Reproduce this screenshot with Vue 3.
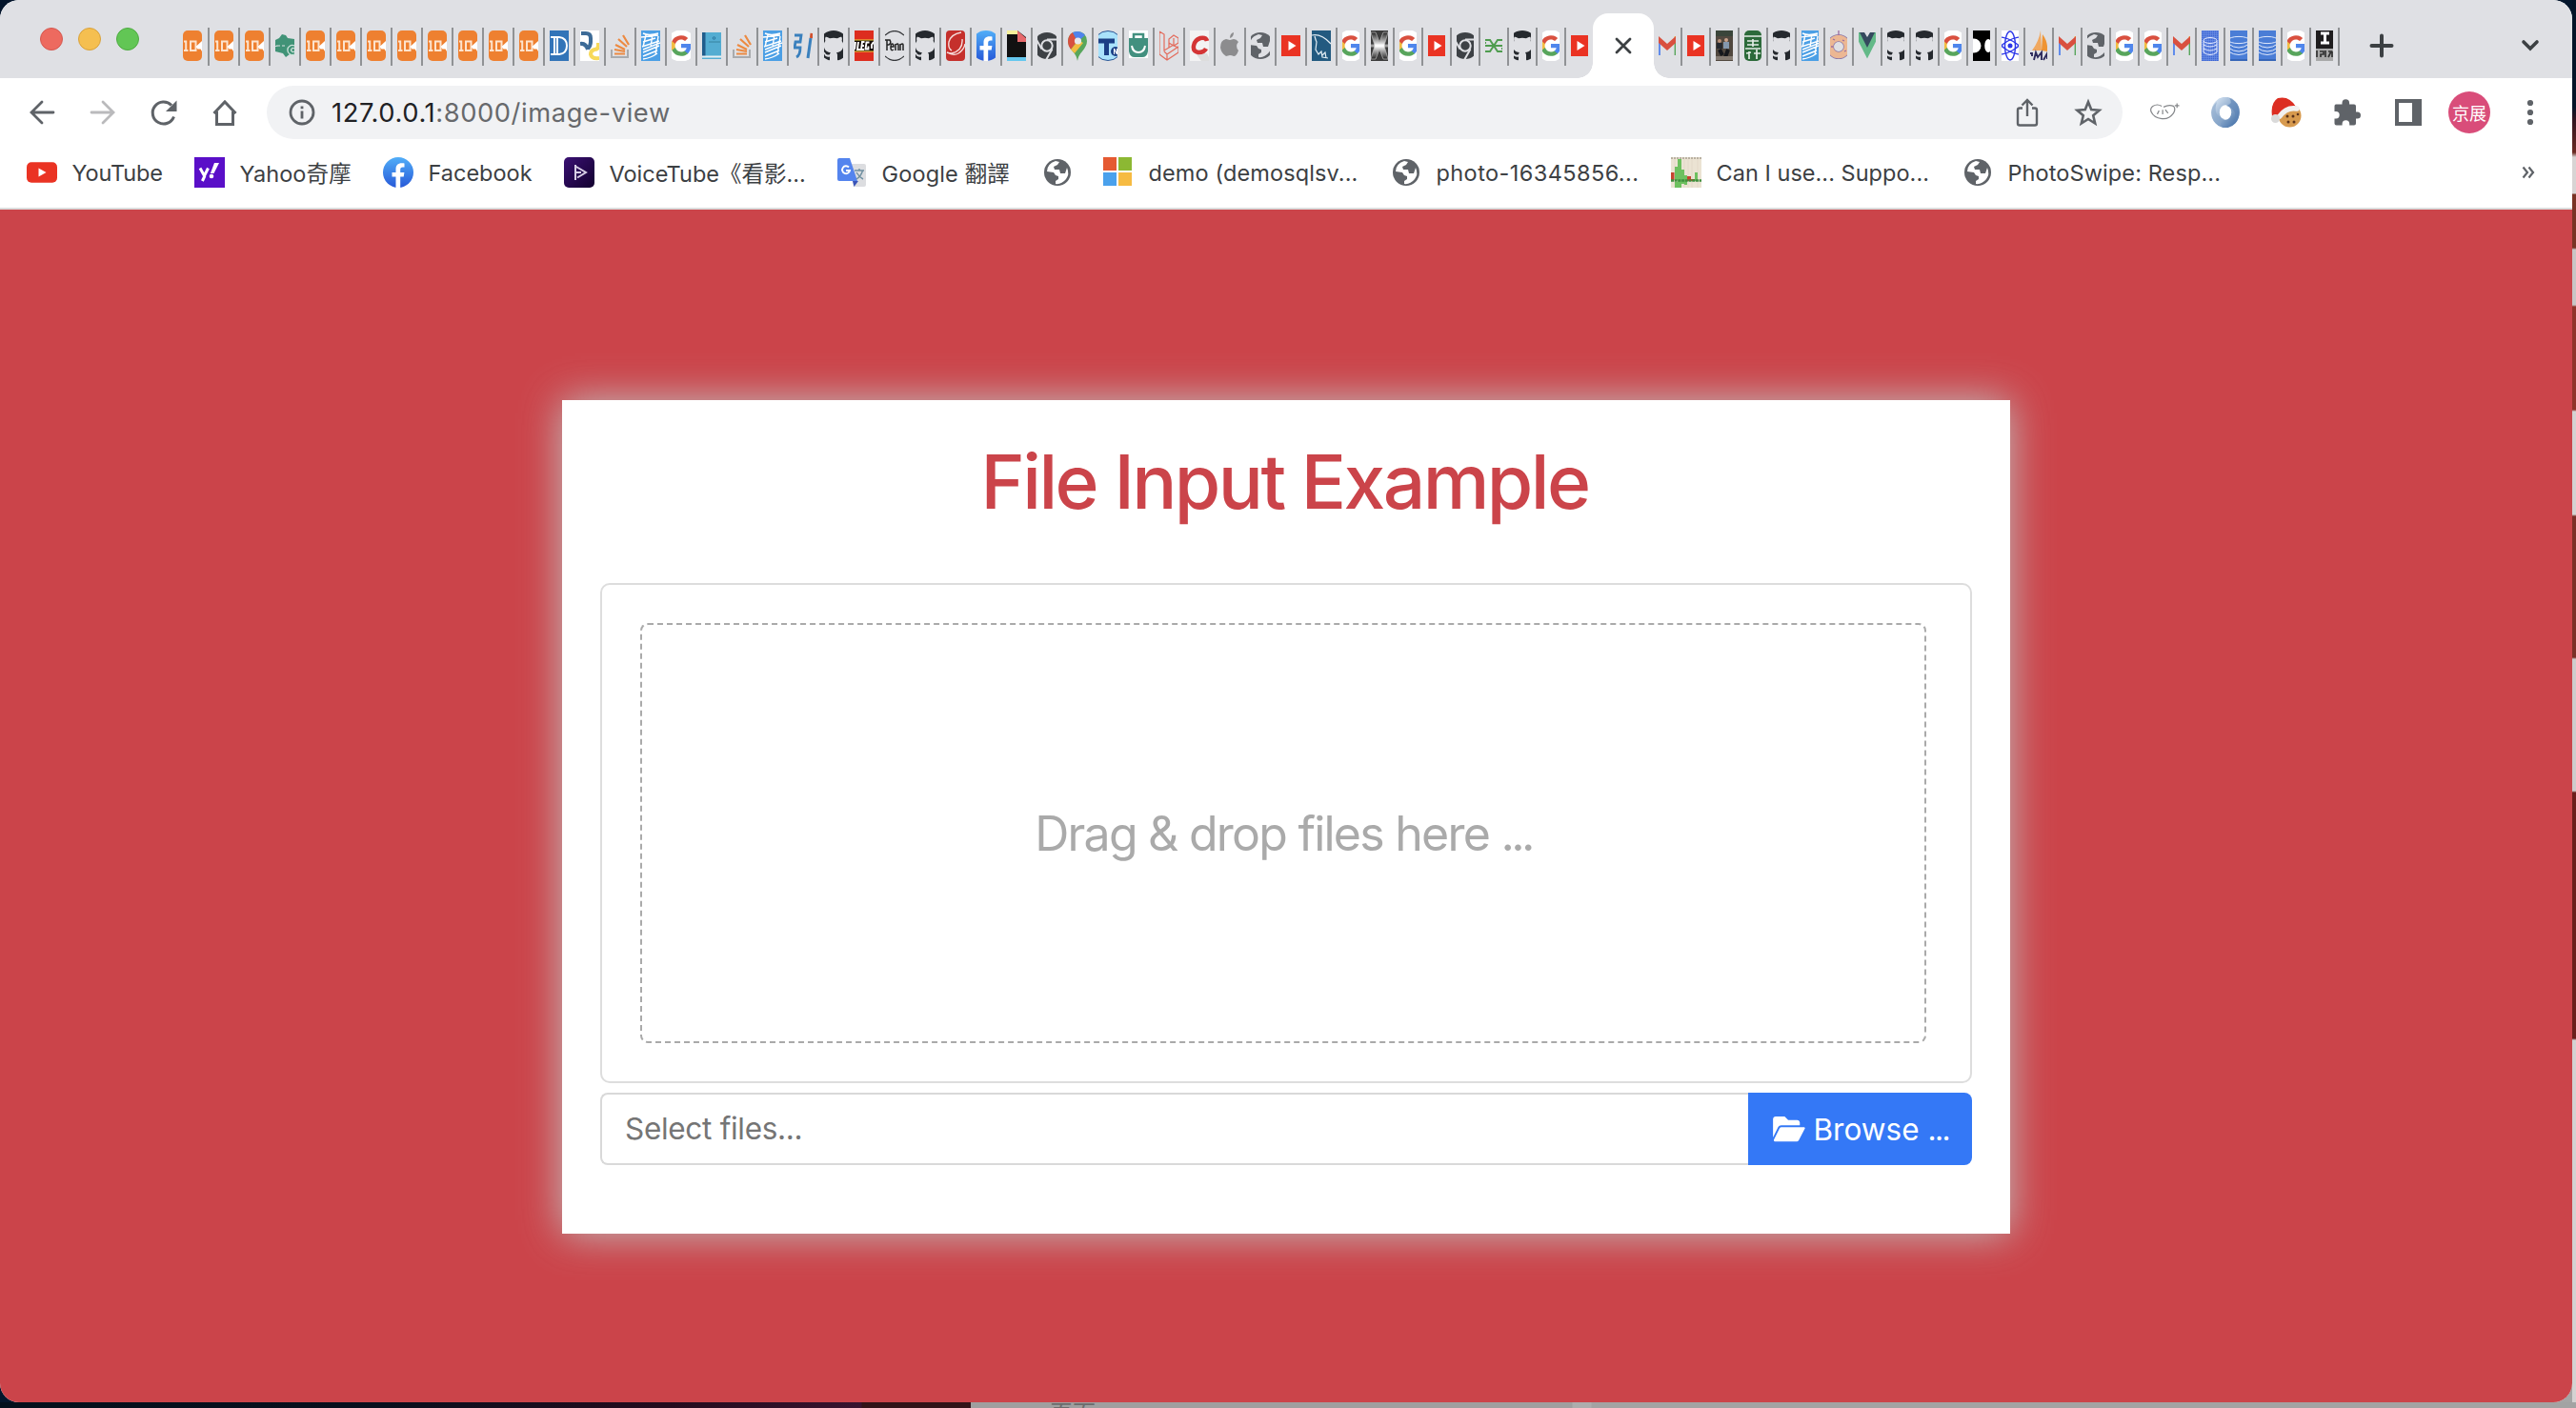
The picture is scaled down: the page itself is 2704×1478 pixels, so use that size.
<script setup>
const tabs = (width, names) => names.split(' ').map((icon) => ({ icon, width }))

const firstTabs = [
  { icon: 'job', width: 22 },
  ...tabs(20, 'job job leaf job job job job job job job job dee python stack hex google book stack hex yin github lego penn github swoosh facebook doc chrome maps tn bag laravel cee apple globe youtube mysql'),
  ...tabs(18, 'google exx google youtube chrome knot github google youtube')
]
const lastTabs = tabs(18, 'gmail youtube photo herb github hex donut vue github github google medium atom pma gmail globe google google gmail dbgrid db db google idea')

const bookmarks = [
  { icon: 'ytmark', label: 'YouTube', width: 176, spacing: -0.15 },
  { icon: 'yahoo', label: 'Yahoo奇摩', width: 198, spacing: 0.1 },
  { icon: 'facebook', label: 'Facebook', width: 190, spacing: 0 },
  { icon: 'voicetube', label: 'VoiceTube《看影...', width: 286, spacing: 0 },
  { icon: 'translate', label: 'Google 翻譯', width: 216, spacing: 0.15 },
  { icon: 'world', label: '', width: 64, spacing: 0 },
  { icon: 'microsoft', label: 'demo (demosqlsv...', width: 302, spacing: 0.12 },
  { icon: 'world', label: 'photo-16345856...', width: 294, spacing: 0.42 },
  { icon: 'caniuse', label: 'Can I use... Suppo...', width: 306, spacing: 0.03 },
  { icon: 'world', label: 'PhotoSwipe: Resp...', width: 300, spacing: 0.1 }
]
</script>

<template>
  <svg class="sprite" width="0" height="0" aria-hidden="true">
    <defs>
      <linearGradient id="fbg" x1="0" y1="0" x2="0" y2="1"><stop offset="0" stop-color="#51aef8" /><stop offset="1" stop-color="#2759d8" /></linearGradient>
      <linearGradient id="vtg" x1="0" y1="0" x2="1" y2="1"><stop offset="0" stop-color="#3a1173" /><stop offset="1" stop-color="#12002e" /></linearGradient>
      <linearGradient id="xg" x1="0" y1="0" x2="0" y2="1"><stop offset="0" stop-color="#222" /><stop offset=".5" stop-color="#fff" /><stop offset="1" stop-color="#222" /></linearGradient>
      <linearGradient id="jsg" x1="0" y1="0" x2="1" y2="1"><stop offset="0" stop-color="#cfdeee" /><stop offset="1" stop-color="#4d78ad" /></linearGradient>
      <pattern id="grid" width="2" height="2" patternUnits="userSpaceOnUse"><path d="M0 .5H2M.5 0V2" stroke="#6f92e6" stroke-width=".6" /></pattern>
    </defs>
    <symbol id="job" viewBox="0 0 32 32" preserveAspectRatio="xMidYMid slice">
      <rect x="6" width="20" height="32" rx="5" fill="#ee8030" />
      <path d="M7 11.500h2.200V21M7 21h4.500M14 11.500h5.500V21H14z" fill="none" stroke="#fde3cd" stroke-width="2" />
      <path d="M19.500 17l6.500-6v11l-1.500-2.500h-3z" fill="#fff" />
    </symbol>
    <symbol id="leaf" viewBox="0 0 32 32" preserveAspectRatio="xMidYMid slice">
      <path d="M6 10l4-2 3-4 4 1 2 3 7 1v17l-5-1-4 3-3-4-8-2V17h3l-3-1z" fill="#419377" />
      <path d="M7 16h4M13 16h3" stroke="#dfe0e4" stroke-width="1" />
      <path d="M26 16a5 5 0 1 0 0 9M26 19a2 2 0 1 0 0 3" fill="none" stroke="#cfe4dc" stroke-width="1.300" />
    </symbol>
    <symbol id="dee" viewBox="0 0 32 32" preserveAspectRatio="xMidYMid slice">
      <rect width="32" height="32" fill="#3274b8" />
      <path d="M7 7h9q8 1 8 9t-8 9H7M11 7v18M7 7h4M14 8v16" fill="none" stroke="#fff" stroke-width="2" />
    </symbol>
    <symbol id="python" viewBox="0 0 32 32" preserveAspectRatio="xMidYMid slice">
      <rect width="32" height="32" fill="#fff" />
      <path d="M7 3h5q5 0 5 5v4q0 4-3 7M6 14q6-1 8 6" fill="none" stroke="#3d6b97" stroke-width="4" />
      <path d="M25 13v3q0 4-4 4-4 1-4 5 1 5 9 4" fill="none" stroke="#f7d959" stroke-width="4" />
    </symbol>
    <symbol id="stack" viewBox="0 0 32 32" preserveAspectRatio="xMidYMid slice">
      <path d="M7 20v8h17v-8" fill="none" stroke="#a9abae" stroke-width="2" />
      <path d="M10 24.500h11M10 20l11 2M11 15l10 5M14 9l9 8M19 5l6 10" fill="none" stroke="#ec8a42" stroke-width="2.200" />
    </symbol>
    <symbol id="hex" viewBox="0 0 32 32" preserveAspectRatio="xMidYMid slice">
      <rect width="32" height="32" fill="#4b9fe5" />
      <path d="M8 3q6 3 16 0M6 7l18-2M8 12l13-4M11 5l-3 12M18 4l-2 13M7 17l18-6M8 20l18-7M8 23l17-7M8 27l15-6M8 30q8-1 15-6M24 6l-3 20" fill="none" stroke="#fff" stroke-width="1.400" />
    </symbol>
    <symbol id="google" viewBox="0 0 32 32" preserveAspectRatio="xMidYMid slice">
      <circle cx="16" cy="16" r="16.500" fill="#fff" />
      <g transform="translate(4.200 4.200) scale(.98)">
        <path fill="#4f86ec" d="M22.560 12.250c0-.78-.07-1.530-.2-2.250H12v4.260h5.920a5.060 5.060 0 0 1-2.200 3.320v2.770h3.570c2.080-1.920 3.270-4.740 3.270-8.100z" />
        <path fill="#58a55c" d="M12 23c2.970 0 5.460-.98 7.280-2.660l-3.570-2.770c-.98.660-2.230 1.060-3.710 1.060-2.860 0-5.290-1.930-6.160-4.530H2.180v2.840A11 11 0 0 0 12 23z" />
        <path fill="#f2bd42" d="M5.840 14.090a6.600 6.600 0 0 1 0-4.180V7.070H2.180a11 11 0 0 0 0 9.860z" />
        <path fill="#d9503f" d="M12 5.380c1.620 0 3.060.56 4.210 1.640l3.150-3.150A11 11 0 0 0 2.180 7.070l3.660 2.840C6.710 7.310 9.140 5.380 12 5.380z" />
      </g>
    </symbol>
    <symbol id="book" viewBox="0 0 32 32" preserveAspectRatio="xMidYMid slice">
      <rect x="6" y="2" width="20" height="28" fill="#54add2" /><rect x="6" y="2" width="3.500" height="25" fill="#205d8c" />
      <path d="M6 27.500h20" stroke="#e7f0f5" stroke-width="2" /><circle cx="18.500" cy="8" r="1.300" fill="none" stroke="#28759e" /><path d="M13 12h12" stroke="#37829f" />
    </symbol>
    <symbol id="yin" viewBox="0 0 32 32" preserveAspectRatio="xMidYMid slice">
      <path d="M7 5h7l-1 7H8l-1 6h6q0 8-4 10" fill="none" stroke="#3a80bd" stroke-width="2.800" />
      <path d="M24 8l-3 21" stroke="#3a80bd" stroke-width="3" /><path d="M25 3l-.6 5" stroke="#d1512f" stroke-width="3" />
    </symbol>
    <symbol id="github" viewBox="0 0 32 32" preserveAspectRatio="xMidYMid slice">
      <path fill="#25292e" d="M16 0C7 0 0 7 0 16c0 7 4.600 13 11 15.300.8.100 1-.4 1-.8v-3c-4.400 1-5.400-1.900-5.400-1.900-.7-1.900-1.800-2.400-1.800-2.400-1.400-1 .1-1 .1-1 1.600.1 2.500 1.700 2.500 1.700 1.400 2.400 3.700 1.700 4.600 1.300.1-1 .6-1.700 1-2.100-3.500-.4-7.200-1.800-7.200-7.900 0-1.700.6-3.200 1.600-4.300-.1-.4-.7-2 .2-4.200 0 0 1.300-.4 4.400 1.600a15 15 0 0 1 8 0c3.100-2 4.400-1.600 4.400-1.600.9 2.200.3 3.800.2 4.200 1 1.100 1.600 2.600 1.600 4.300 0 6.200-3.700 7.500-7.300 7.900.6.500 1.100 1.500 1.100 3v4.400c0 .4.300.9 1.100.8A16 16 0 0 0 32 16C32 7 25 0 16 0z" />
    </symbol>
    <symbol id="lego" viewBox="0 0 32 32" preserveAspectRatio="xMidYMid slice">
      <rect width="32" height="32" fill="#dd2d1f" /><rect x="5" y="9.500" width="22" height="13" fill="#f5d93c" />
      <rect x="5" y="10.500" width="22" height="11" fill="#140c08" />
      <path d="M7 12l-1 8M10 12l-1 8h3M16.500 12H14l-1 8h3M13.500 16H16M21.500 12.500h-3l-1 7h3v-3M26 12l-2 3v4" fill="none" stroke="#fff" stroke-width="1.900" />
    </symbol>
    <symbol id="penn" viewBox="0 0 32 32" preserveAspectRatio="xMidYMid slice">
      <path d="M6 5q10-9 20 0M6 27q10 9 20 0" fill="none" stroke="#36383b" stroke-width="1.200" />
      <path d="M8 10v11M6 10h5q2 3-1 5H8M12 17h3q0-3-1.500-3t-1.500 4 3 2M17 14v7M17 15q3-2 3 0v6M22 14v7M22 15q3-2 3 0v6" fill="none" stroke="#222" stroke-width="1.500" />
    </symbol>
    <symbol id="swoosh" viewBox="0 0 32 32" preserveAspectRatio="xMidYMid slice">
      <rect x="6" width="20" height="32" rx="4" fill="#c5302c" /><path d="M22 2Q11 4 9 12q-1 7 3 9M23 9q1 12-11 15-3 0-5-1 7 4 12 1 6-4 7-10" fill="none" stroke="#f6dedc" stroke-width="1.400" />
    </symbol>
    <symbol id="facebook" viewBox="0 0 32 32" preserveAspectRatio="xMidYMid slice">
      <circle cx="16" cy="16" r="16" fill="url(#fbg)" />
      <path fill="#fff" d="M13.500 32V20.600H9.500V16h4v-3.500c0-4 2.400-6.200 6-6.200 1.800 0 3 .2 3 .2v4h-1.800c-2 0-2.500 1.200-2.500 2.500v3h4.200l-.7 4.600h-3.500V32z" />
    </symbol>
    <symbol id="doc" viewBox="0 0 32 32" preserveAspectRatio="xMidYMid slice">
      <rect x="6" width="20" height="32" fill="#111" /><path d="M6 0h11v4H6z" fill="#f7f09a" /><path d="M17 0l9 8v4h-9z" fill="#e6696c" /><path d="M6 28h20v4H6z" fill="#65c7ee" /><path d="M17 0h9v7z" fill="#dfe0e4" />
    </symbol>
    <symbol id="chrome" viewBox="0 0 32 32" preserveAspectRatio="xMidYMid slice">
      <circle cx="16" cy="16" r="14" fill="#3d4145" /><circle cx="16" cy="16" r="5.700" fill="none" stroke="#dfe0e4" stroke-width="2" />
      <path d="M16 9.500h13M10.500 19.500L4 8M21.500 19.500L15 31" fill="none" stroke="#dfe0e4" stroke-width="2" />
    </symbol>
    <symbol id="maps" viewBox="0 0 32 32" preserveAspectRatio="xMidYMid slice">
      <path d="M16 32q-1-6-5-10-5-6-5-11Q7 1 16 1t10 10q0 5-5 11-4 4-5 10z" fill="#58a65c" /><path d="M6 12Q6 5 11 2l5 9-7 9q-3-4-3-8z" fill="#d85140" /><path d="M11 2q8-3 13 3l-8 7z" fill="#5083ec" /><path d="M9 20l8-10 5 3-9 11z" fill="#f2bd42" /><circle cx="16.500" cy="11" r="3.600" fill="#e8e8ea" />
    </symbol>
    <symbol id="tn" viewBox="0 0 32 32" preserveAspectRatio="xMidYMid slice">
      <circle cx="16" cy="16" r="15.500" fill="#a9e2fb" stroke="#2c5594" /><path d="M6 11h17M14.500 11v15" stroke="#1b3f86" stroke-width="5" /><circle cx="24" cy="22" r="5" fill="#1b3f86" /><path d="M22.500 25v-6l3 6v-6" fill="none" stroke="#fff" stroke-width="1.100" />
    </symbol>
    <symbol id="bag" viewBox="0 0 32 32" preserveAspectRatio="xMidYMid slice">
      <rect x="6" width="20" height="29" fill="#fff" /><path d="M6 8h20v14q-1 6-6 6h-8q-5 0-6-6z" fill="#42907f" /><path d="M11 8V4h10v4" fill="none" stroke="#42907f" stroke-width="2.500" /><path d="M9 16q1 7 7 7t7-7" fill="none" stroke="#fff" stroke-width="2" />
    </symbol>
    <symbol id="laravel" viewBox="0 0 32 32" preserveAspectRatio="xMidYMid slice">
      <path d="M6 1l5 3v17l5-3V9l5-4 5 3v5l-5 3-5-3M16 18l5-3v-7M6 1v24l8 6 12-8v-6l-12 8-3-3M14 31v-6M21 16l5 2" fill="none" stroke="#e36b5c" stroke-width="1.200" />
    </symbol>
    <symbol id="cee" viewBox="0 0 32 32" preserveAspectRatio="xMidYMid slice">
      <rect x="6" width="20" height="32" fill="#f3f3f3" /><path d="M12 24h12l2 4v4h-8z" fill="#ddd" /><path d="M24 11q-1-4-7-3-6 2-7 8t5 7q6 0 8-4" fill="none" stroke="#d43535" stroke-width="4.500" />
    </symbol>
    <symbol id="apple" viewBox="0 0 32 32" preserveAspectRatio="xMidYMid slice">
      <path d="M20 9q3 0 5 3-4 4 0 9-2 6-5 6-2-1-4-1l-4 1Q7 24 6 18q0-8 6-9l4 1zM16 8q0-5 4-6 0 5-4 6z" fill="#8c8c8e" />
    </symbol>
    <symbol id="globe" viewBox="0 0 32 32" preserveAspectRatio="xMidYMid slice">
      <circle cx="16" cy="16" r="14" fill="#5f6368" /><path d="M5 15q0-8 9-11l4 1-2 3-4 2 1 3h5l1 4h5l2-6q3 7-1 12-5 6-11 5v-3l3-2v-3l-3-1-2-3z" fill="#dfe0e4" />
    </symbol>
    <symbol id="world" viewBox="0 0 32 32">
      <circle cx="16" cy="16" r="14" fill="#5f6368" /><path d="M5 15q0-8 9-11l4 1-2 3-4 2 1 3h5l1 4h5l2-6q3 7-1 12-5 6-11 5v-3l3-2v-3l-3-1-2-3z" fill="#fff" />
    </symbol>
    <symbol id="youtube" viewBox="0 0 32 32" preserveAspectRatio="xMidYMid slice">
      <rect y="5" width="32" height="22" rx="4" fill="#ea3323" /><path d="M13.500 11v10l8-5z" fill="#fff" />
    </symbol>
    <symbol id="ytmark" viewBox="0 0 32 32">
      <rect y="5.200" width="32" height="21.600" rx="5" fill="#ea3323" /><path d="M12.500 11.500v9l8-4.500z" fill="#fff" />
    </symbol>
    <symbol id="mysql" viewBox="0 0 32 32" preserveAspectRatio="xMidYMid slice">
      <rect width="32" height="32" fill="#235a80" /><path d="M6 5q10-2 20 9M9 6q1 4 2 6l-1 8 3 5 3-3 1 6 6 1M17 26l3-3 1 6" fill="none" stroke="#e3eef5" stroke-width="1.200" />
    </symbol>
    <symbol id="exx" viewBox="0 0 32 32" preserveAspectRatio="xMidYMid slice">
      <rect width="32" height="32" fill="#3c3c3c" /><path d="M7 2h5l4 10 4-10h5l-4 14 4 14h-5l-4-10-4 10H7l4-14z" fill="url(#xg)" stroke="#bbb" stroke-width=".7" /><path d="M7 16h18" stroke="#fff" stroke-width="3" opacity=".5" />
    </symbol>
    <symbol id="knot" viewBox="0 0 32 32" preserveAspectRatio="xMidYMid slice">
      <path d="M7 10h5l8 12h5M7 22h5l8-12h5M7 16h18M7 12v2M25 18v2" fill="none" stroke="#4f9c4f" stroke-width="2" />
    </symbol>
    <symbol id="gmail" viewBox="0 0 32 32" preserveAspectRatio="xMidYMid slice">
      <path d="M8 11v15" stroke="#5383ec" stroke-width="1.800" /><path d="M24.500 11v15" stroke="#58a65c" stroke-width="1.800" /><path d="M24.500 6v5" stroke="#f2bd42" stroke-width="1.800" /><path d="M7 6l9 8 9-8v7l-9 8-9-8z" fill="#d9503f" />
    </symbol>
    <symbol id="photo" viewBox="0 0 32 32" preserveAspectRatio="xMidYMid slice">
      <rect width="32" height="32" fill="#51483f" /><path d="M7 0h18v6H7z" fill="#3a453a" /><circle cx="11" cy="11" r="2" fill="#b99078" /><circle cx="18" cy="10" r="2" fill="#c9a189" /><path d="M8 13h6v6H8z" fill="#25292f" /><path d="M15 12h6v7h-6z" fill="#8397ad" /><path d="M11 20l3 6M20 20l-3 8" stroke="#16181d" stroke-width="4" /><path d="M7 29h19" stroke="#857b72" stroke-width="4" />
    </symbol>
    <symbol id="herb" viewBox="0 0 32 32" preserveAspectRatio="xMidYMid slice">
      <rect x="7" width="18" height="32" rx="5" fill="#2c6a3a" /><path d="M7 6h18M10 11h12M10 15h12M16 9v8M8 19h16M12 22v8M20 20v10M9 24l5-1M17 24h7" fill="none" stroke="#e4ece6" stroke-width="1.700" />
    </symbol>
    <symbol id="donut" viewBox="0 0 32 32" preserveAspectRatio="xMidYMid slice">
      <circle cx="16" cy="17" r="9" fill="none" stroke="#8a76a8" stroke-width="8" /><circle cx="16" cy="17" r="9" fill="none" stroke="#ecb793" stroke-width="6.500" /><path d="M16 0v5M10 9l2 1M20 10l2 1M8 17h2M22 22l2-1" stroke="#9a6c9e" stroke-width="1.300" />
    </symbol>
    <symbol id="vue" viewBox="0 0 32 32" preserveAspectRatio="xMidYMid slice">
      <path d="M2 2h28L16 29.500z" fill="#63b988" /><path d="M8 2h16l-8 16z" fill="#35495e" /><path d="M13 2h6l-3 5z" fill="#dfe0e4" />
    </symbol>
    <symbol id="medium" viewBox="0 0 32 32" preserveAspectRatio="xMidYMid slice">
      <rect width="32" height="32" fill="#000" /><circle cx="8" cy="16" r="7.500" fill="#fff" /><ellipse cx="23" cy="16" rx="3.800" ry="7" fill="#fff" />
    </symbol>
    <symbol id="atom" viewBox="0 0 32 32" preserveAspectRatio="xMidYMid slice">
      <rect width="32" height="32" fill="#fff" /><g fill="none" stroke="#2b36e8" stroke-width="1.400"><ellipse cx="16" cy="16" rx="5.500" ry="15" /><ellipse cx="16" cy="16" rx="5.500" ry="15" transform="rotate(60 16 16)" /><ellipse cx="16" cy="16" rx="5.500" ry="15" transform="rotate(120 16 16)" /></g><circle cx="16" cy="16" r="2.500" fill="#2b36e8" />
    </symbol>
    <symbol id="pma" viewBox="0 0 32 32" preserveAspectRatio="xMidYMid slice">
      <path d="M18 0q-2 12-9 21h10z" fill="#f0a860" /><path d="M20 4q6 8 5 18l-6-1z" fill="#ef9433" /><path d="M7 24h2v3M11 31l2-8 2 5 4-5v8M21 31l4-7v6" fill="none" stroke="#2d2b5c" stroke-width="1.900" />
    </symbol>
    <symbol id="dbgrid" viewBox="0 0 32 32" preserveAspectRatio="xMidYMid slice">
      <rect width="32" height="32" fill="#3f66d2" /><rect width="32" height="32" fill="url(#grid)" /><g fill="none" stroke="#e7ecff" stroke-width="1"><ellipse cx="16" cy="10.500" rx="7" ry="3" /><path d="M9 11v12q7 5 14 0V11M9 15q7 4 14 0M9 19q7 4 14 0" /></g>
    </symbol>
    <symbol id="db" viewBox="0 0 32 32" preserveAspectRatio="xMidYMid slice">
      <rect width="32" height="32" fill="#4a7dd6" /><path d="M0 31h32" stroke="#325fae" stroke-width="1.500" /><g fill="none" stroke="#dfe8fb" stroke-width="1"><ellipse cx="16" cy="10" rx="11" ry="3.600" /><path d="M5 14q11 8 22 0M5 18q11 8 22 0M5 22q11 7 22 0" /></g>
    </symbol>
    <symbol id="idea" viewBox="0 0 32 32" preserveAspectRatio="xMidYMid slice">
      <rect width="32" height="19" fill="#1f1d1e" /><rect y="19" width="32" height="13" fill="#a8a8a8" /><path d="M12 3h9M12 13h9M16.500 3v10" stroke="#fff" stroke-width="3" /><path d="M8 21v7M11 22h4v3h-3v3M17 21v7M20 22h3l-3 6M24 22v6" fill="none" stroke="#333" stroke-width="1.700" />
    </symbol>
    <symbol id="yahoo" viewBox="0 0 32 32">
      <rect width="32" height="32" fill="#5a0fc8" /><path d="M6 11.500l4.500 8 4-8M11 19.500l-2.600 5.500" fill="none" stroke="#fff" stroke-width="3" /><path d="M21 6h5l-5.500 11h-3.600z" fill="#fff" /><circle cx="18" cy="20" r="2.300" fill="#fff" />
    </symbol>
    <symbol id="voicetube" viewBox="0 0 32 32">
      <rect width="32" height="32" rx="5" fill="url(#vtg)" /><path d="M12 8v16M12 9.500l11 6.500-9 5.500M12 16h6" fill="none" stroke="#d8cfe6" stroke-width="2" />
    </symbol>
    <symbol id="translate" viewBox="0 0 32 32">
      <path d="M13 7h16q2 0 2 2v20q0 2-2 2H18z" fill="#dcdde0" /><path d="M17 25h6l-4.500 6z" fill="#3a54b8" /><path d="M3 1h11l8 24H3q-2 0-2-2V3q0-2 2-2z" fill="#5484ee" /><path d="M13 10.500a4 4 0 1 0 1 3.500h-4" fill="none" stroke="#fff" stroke-width="1.900" /><path d="M19 14h10M24 12v2M21 23q5-3 6.500-9M21 16q3 5 7 7" fill="none" stroke="#6f8fa0" stroke-width="1.400" />
    </symbol>
    <symbol id="microsoft" viewBox="0 0 32 32">
      <path d="M0 0h14v14H0z" fill="#e55a32" /><path d="M16 0h14v14H16z" fill="#8cb833" /><path d="M0 16h14v14H0z" fill="#4aa1ec" /><path d="M16 16h14v14H16z" fill="#f6bb42" />
    </symbol>
    <symbol id="caniuse" viewBox="0 0 32 32">
      <rect width="32" height="32" fill="#ebe3d3" /><path d="M0 1h32" stroke="#a9a091" stroke-width="1.500" stroke-dasharray="2 1" /><path d="M4 2v30M8 2v30M14 2v30M18 2v30M22 2v30M28 2v30" stroke="#ddd4c2" stroke-width=".6" /><path d="M0 16h3.500v8H0zM17 20h4v5h-4zM21 23h4v2h-4z" fill="#c5432f" /><path d="M4 10h3v14H4zM7 2h4v30H7zM11 13h3v15h-3zM14 19h3v10h-3zM4 26h3v6H4zM25 16h3v9h-3z" fill="#6dc05f" /><path d="M0 24.500h32" stroke="#3f8f3d" stroke-width="2.400" stroke-dasharray="3 .7" />
    </symbol>
  </svg>

  <div class="desktop">
    <div class="stage">
      <div class="window">
        <header class="tabstrip">
          <div class="lights"><i class="close"></i><i class="min"></i><i class="max"></i></div>
          <div class="tabs">
            <span v-for="(t, i) in firstTabs" :key="i" class="tab">
              <svg :width="t.width" height="32"><use :href="'#' + t.icon" width="100%" height="32" /></svg>
            </span>
          </div>
          <div class="active-tab">
            <svg width="18" height="18" viewBox="0 0 18 18"><path d="M2 2l14 14M16 2L2 16" stroke="#3c4043" stroke-width="2.800" stroke-linecap="round" /></svg>
          </div>
          <div class="tabs after">
            <span v-for="(t, i) in lastTabs" :key="i" class="tab">
              <svg :width="t.width" height="32"><use :href="'#' + t.icon" width="100%" height="32" /></svg>
            </span>
          </div>
          <svg class="plus" width="26" height="26" viewBox="0 0 26 26"><path d="M13 2.500v21M2.500 13h21" stroke="#3c4043" stroke-width="4" stroke-linecap="round" /></svg>
          <svg class="chevron" width="20" height="14" viewBox="0 0 20 14"><path d="M3 3l7 7 7-7" fill="none" stroke="#3c4043" stroke-width="3.600" stroke-linecap="round" /></svg>
        </header>

        <div class="toolbar">
          <div class="nav">
            <svg viewBox="0 0 32 32"><path d="M28 16H6M16 5L5 16l11 11" fill="none" stroke="#5f6368" stroke-width="2.800" stroke-linecap="round" /></svg>
            <svg viewBox="0 0 32 32"><path d="M4 16h22M16 5l11 11-11 11" fill="none" stroke="#bababc" stroke-width="2.800" stroke-linecap="round" /></svg>
            <svg viewBox="0 0 32 32"><path d="M26.500 20.500A11.500 11.500 0 1 1 24 8.500" fill="none" stroke="#5f6368" stroke-width="3" /><path d="M29.500 3.500V15H18z" fill="#5f6368" /></svg>
            <svg viewBox="0 0 32 32"><path d="M4.500 17L16 5l11.500 12M7.500 15v13.500h17V15" fill="none" stroke="#5f6368" stroke-width="3" /></svg>
          </div>
          <div class="omnibox">
            <svg class="info" viewBox="0 0 28 28"><circle cx="14" cy="14" r="12" fill="none" stroke="#5f6368" stroke-width="2.800" /><path d="M14 12.500v8M14 7.500v2.800" stroke="#5f6368" stroke-width="2.800" /></svg>
            <span class="url"><b>127.0.0.1</b>:8000/image-view</span>
            <svg class="share" viewBox="0 0 32 32"><path d="M11 11.500H8q-2 0-2 2v14q0 2 2 2h16q2 0 2-2v-14q0-2-2-2h-3M16 20V3.500M10.500 8.500L16 3l5.500 5.500" fill="none" stroke="#5f6368" stroke-width="2.400" /></svg>
            <svg class="star" viewBox="0 0 32 32"><path d="M16 5l3.200 8 8.400.7-6.400 5.500 2 8.300L16 23l-7.200 4.500 2-8.300-6.400-5.500 8.400-.7z" fill="none" stroke="#5f6368" stroke-width="2.600" /></svg>
          </div>
          <div class="extensions">
            <svg viewBox="0 0 34 32"><path d="M4 9q5-3 10 0M16 10q6-3 11-1 3 3 0 8-5 7-13 6Q5 22 2 15q-1-4 2-6M11 14l-2 4M15 13v5M18 13l3 4M31 6v5M28.500 8.500h5" fill="none" stroke="#85878a" stroke-width="1.300" /></svg>
            <svg viewBox="0 0 32 32"><ellipse cx="16" cy="16" rx="10.500" ry="12" fill="none" stroke="url(#jsg)" stroke-width="8.500" /><path d="M20 1q11 4 11 15-1 7-6 11 5-14-8-18 8-3 3-8z" fill="#5f86b7" opacity=".65" /><path d="M12 31Q1 27 1 16q1-7 6-11-5 14 8 18-6 4-3 8z" fill="#88a6ca" opacity=".6" /></svg>
            <svg viewBox="0 0 32 32"><circle cx="19.500" cy="19.500" r="12" fill="#d79a4e" /><g fill="#5a321b"><circle cx="17" cy="20" r="1.500" /><circle cx="23" cy="20" r="1.500" /><circle cx="18" cy="26" r="1.500" /><circle cx="24" cy="26" r="1.500" /><circle cx="28" cy="18" r="1.300" /></g><path d="M1 20Q-1 6 7 1q12-3 19 9L8 21z" fill="#dc2e22" /><path d="M9 20q7-10 18-8" fill="none" stroke="#f2f1f0" stroke-width="5.500" stroke-linecap="round" /><circle cx="4.500" cy="22.500" r="4.500" fill="#dadada" /></svg>
            <svg viewBox="0 0 32 32"><path d="M4 9h6.500V7.500a3.800 3.800 0 0 1 7.600 0V9H23q2 0 2 2v6h1.500a3.500 3.500 0 0 1 0 7H25v5q0 2-2 2h-4.800v-1.500a3.800 3.800 0 0 0-7.600 0V31H4.500q-2 0-2-2v-5H4a3.700 3.700 0 0 0 0-7.400H2.500V11q0-2 1.500-2z" transform="translate(0 -1.500)" fill="#5f6368" /></svg>
            <svg viewBox="0 0 32 32"><path fill-rule="evenodd" d="M2 2h28v28H2zM6 6v20h14V6z" fill="#5f6368" /></svg>
            <span class="avatar">京展</span>
            <svg class="menu" viewBox="0 0 32 32"><circle cx="16" cy="6" r="3.100" fill="#5f6368" /><circle cx="16" cy="16" r="3.100" fill="#5f6368" /><circle cx="16" cy="26" r="3.100" fill="#5f6368" /></svg>
          </div>
        </div>

        <nav class="bookmarks">
          <span v-for="(b, i) in bookmarks" :key="i" class="bookmark" :style="{ width: b.width + 'px' }">
            <svg width="32" height="32"><use :href="'#' + b.icon" width="32" height="32" /></svg>
            <span v-if="b.label" :style="{ letterSpacing: b.spacing + 'px' }">{{ b.label }}</span>
          </span>
          <svg class="more" viewBox="0 0 14 14"><path d="M1.500 1.500L6 7l-4.500 5.500M7.500 1.500L12 7l-4.500 5.500" fill="none" stroke="#5f6368" stroke-width="2.200" /></svg>
        </nav>

        <main class="page">
          <section class="card">
            <h1>File Input Example</h1>
            <div class="preview"><div class="dropzone">Drag &amp; drop files here <span class="dots">...</span></div></div>
            <div class="group">
              <div class="caption">Select files...</div>
              <button class="browse">
                <svg viewBox="0 0 576 512"><path fill="#fff" d="M147.800 192H480V144c0-26.500-21.500-48-48-48H272l-64-64H48C21.500 32 0 53.500 0 80v328.400l90.500-181.100C101.400 205.600 123.400 192 147.800 192zM543.100 224H147.800c-12.100 0-23.200 6.800-28.600 17.700L16 448c-7 14 .3 32 16 32h400.400c12.100 0 23.200-6.800 28.600-17.700l111-215.200C577.400 236.500 569.700 224 543.100 224z" /></svg>
                <span>Browse <span class="dots">...</span></span>
              </button>
            </div>
          </section>
        </main>
      </div>
      <div class="side-edge"></div>
    </div>
    <div class="bottom-edge"><span class="behind">頁面</span></div>
  </div>
</template>

<style>
html, body { margin: 0; overflow: hidden; }
</style>

<style scoped>
* { box-sizing: border-box; }
.sprite { position: absolute; }
svg { display: block; flex: none; }
.desktop {
  width: 2704px; height: 1478px; display: flex; flex-direction: column; overflow: hidden;
  font-family: Inter, "Noto Sans CJK TC", sans-serif;
  background: linear-gradient(90deg, #04162c 0 1300px, transparent 1300px), linear-gradient(#04162c 0 700px, #a5a5a5 700px);
}
.stage { display: flex; height: 1472px; }
.window { width: 2700px; height: 1472px; display: flex; flex-direction: column; border-radius: 20px; overflow: hidden; background: #fff; }
.side-edge { width: 4px; background: linear-gradient(#041428 0 112px, #301420 125px, #6b2a22 160px, #d8d4d4 165px 203px, #7a3325 204px 260px, #c9c5c5 262px 320px, #91342a 322px 430px, #d5d2d2 432px 540px, #7c2f28 542px 690px, #cfcccc 692px 830px, #6d1e1c 832px 1090px, #d4d2d2 1092px); }
.bottom-edge { height: 6px; overflow: hidden; padding-left: 1102px; background: linear-gradient(90deg, #03101c 0, #080f1d 400px, #250b1e 700px, #37132f 904px, #321318 905px 1019px, #9f9f9f 1019px 1650px, #adadad 1651px 1670px, #a3a3a3 1671px); }
.behind { display: block; font-size: 24px; line-height: 24px; color: #6c6c6c; }

.tabstrip { height: 82px; flex: none; background: #dfe0e4; display: flex; align-items: center; padding: 0 34px 0 42px; }
.lights { display: flex; gap: 16px; width: 149px; }
.lights i { width: 24px; height: 24px; border-radius: 50%; }
.close { background: #ed6a5f; border: 1px solid #d55850; }
.min { background: #f5bf50; border: 1px solid #d8a13c; }
.max { background: #62c655; border: 1px solid #4fab42; }
.tabs { display: flex; height: 40px; margin-top: 16px; }
.tab { display: flex; align-items: center; height: 40px; padding: 0 5px 2px; border-right: 2px solid #909295; }
.tab:first-child { padding-left: 0; }
.tabs:not(.after) .tab:last-child { border-right: 0; }
.active-tab { width: 64px; height: 68px; align-self: flex-end; background: #fff; border-radius: 16px 16px 0 0; position: relative; display: flex; align-items: center; justify-content: center; }
.active-tab::before, .active-tab::after { content: ""; position: absolute; bottom: 0; width: 16px; height: 16px; }
.active-tab::before { left: -16px; background: radial-gradient(circle at 0 0, transparent 15.500px, #fff 16px); }
.active-tab::after { right: -16px; background: radial-gradient(circle at 100% 0, transparent 15.500px, #fff 16px); }
.after { margin-left: 5px; }
.plus { margin: 14px 0 0 31px; }
.chevron { margin: 14px 0 0 auto; }

.toolbar { height: 72px; flex: none; display: flex; align-items: center; padding-left: 28px; }
.nav { display: flex; gap: 32px; width: 252px; }
.nav svg, .share, .star, .extensions svg { width: 32px; height: 32px; }
.omnibox { width: 1948px; height: 56px; border-radius: 28px; background: #f1f2f4; display: flex; align-items: center; padding: 0 20px 0 22.500px; }
.info { width: 28px; height: 28px; }
.url { margin-left: 17.500px; font-size: 27.300px; letter-spacing: .6px; color: #67696c; white-space: nowrap; flex: 1; }
.url b { font-weight: 400; color: #202124; }
.star { margin-left: 32px; }
.extensions { display: flex; align-items: center; padding-left: 28px; gap: 32px; }
.extensions .avatar { width: 44px; height: 44px; margin: 0 -4px 0 -6px; border-radius: 50%; background: #d94d7a; color: #fff; font-size: 18px; line-height: 44px; text-align: center; font-family: "Noto Sans CJK TC", sans-serif; }
.extensions .menu { margin-left: -2px; }

.bookmarks { height: 66px; flex: none; display: flex; align-items: center; padding: 0 0 10px 28px; border-bottom: 2px solid #dcdcdc; }
.bookmark { display: flex; align-items: center; gap: 15.500px; font-size: 23.500px; color: #3c4043; white-space: nowrap; }
.more { width: 14px; height: 14px; margin-left: auto; margin-right: 39px; }

.page { flex: 1; background: #cb444a; display: flex; justify-content: center; align-items: flex-start; padding-top: 200px; }
.card { width: 1520px; height: 875px; background: #fff; box-shadow: 0 0 40px silver; padding: 38px 40px 0; }
h1 { margin: 0; padding-right: 3px; height: 154px; line-height: 96px; font-size: 78.500px; font-weight: 500; color: #cb444a; text-align: center; letter-spacing: -2.600px; white-space: nowrap; }
.preview { height: 525px; border: 2px solid #ddd; border-radius: 10px; padding: 40px; }
.dropzone { width: 1350px; height: 441px; border: 2px dashed #aaa; border-radius: 8px; color: #aaa; font-size: 50px; letter-spacing: -1.750px; text-align: center; line-height: 439px; white-space: nowrap; }
.dropzone .dots { letter-spacing: -3.600px; }
.group { display: flex; height: 76px; margin-top: 10px; }
.caption { flex: 1; border: 2px solid #d9d9d9; border-right: 0; border-radius: 8px 0 0 8px; padding-left: 24px; line-height: 72px; font-size: 31.500px; letter-spacing: -.3px; color: #757575; }
.browse { width: 235px; border: 0; border-radius: 0 8px 8px 0; background: #3478f6; color: #fff; display: flex; align-items: center; font: 400 31.500px Inter, sans-serif; padding: 0 0 0 26px; gap: 8.500px; white-space: nowrap; }
.browse .dots { letter-spacing: -1.500px; }
.browse svg { width: 34px; height: 30px; }
</style>
